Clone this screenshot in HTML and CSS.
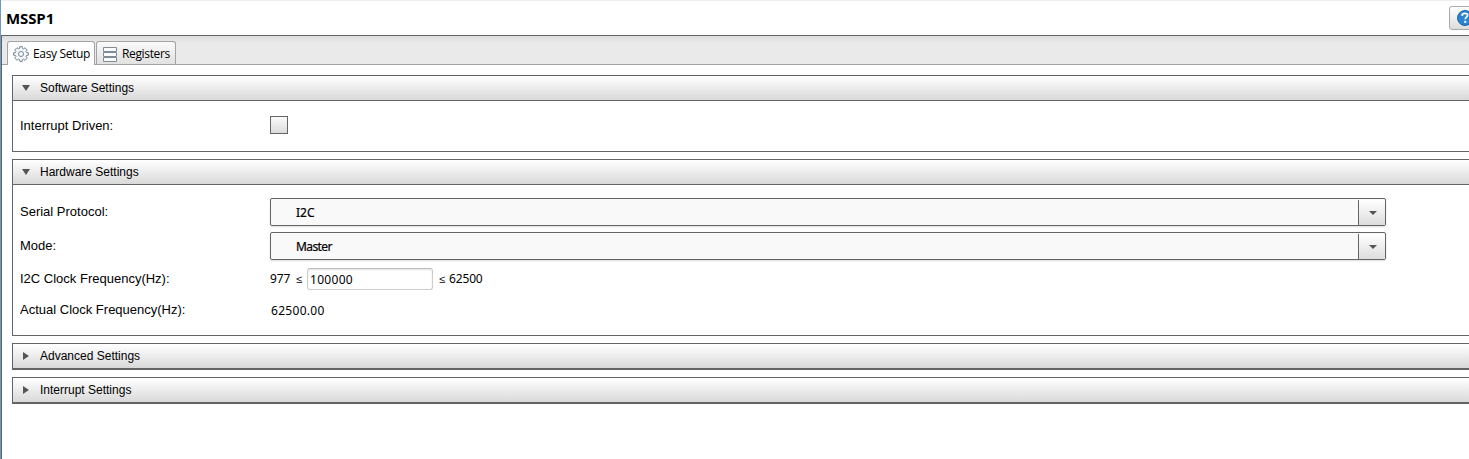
FILE: index.html
```html
<!DOCTYPE html>
<html lang="en">
<head>
<meta charset="utf-8">
<title>MSSP1</title>
<link rel="stylesheet" href="styles.css">
</head>
<body>
<div class="app">
  <header class="titlebar">
    <h1 class="title">MSSP1</h1>
    <button class="help" aria-label="Help">
      <svg width="16" height="16" viewBox="0 0 16 16"><circle cx="8" cy="8" r="7.5" fill="#2b83d0" stroke="#1a65ad"/><path d="M5.3 6V4.1Q6.5 3.3 8 3.3Q10.6 3.3 10.6 5.3Q10.6 6.5 9.2 7.4Q8.3 8 8.3 9.3" fill="none" stroke="#fff" stroke-width="1.7"/><path d="M7.2 10.8h2.1v2H7.2z" fill="#fff"/></svg>
    </button>
  </header>
  <main class="workspace">
    <nav class="tabs">
      <div class="tab tab-active">
        <svg class="gear" width="16" height="16" viewBox="0 0 16 16" fill="none" stroke="#6f8493"><path d="M6.6 2.4 6.8.6h2.4l.2 1.8 1.2.5L12 1.7 14.3 4l-1.2 1.4.5 1.2 1.8.2v2.4l-1.8.2-.5 1.2 1.2 1.4L12 14.3l-1.4-1.2-1.2.5-.2 1.8H6.8l-.2-1.8-1.2-.5L4 14.3 1.7 12l1.2-1.4-.5-1.2-1.8-.2V6.8l1.8-.2.5-1.2L1.7 4 4 1.7l1.4 1.2z" fill="#f4f8fa" /><circle cx="8" cy="8" r="2.5" fill="#fff"/></svg>
        <span class="tab-text easy">Easy Setup</span>
      </div>
      <div class="tab">
        <svg class="rows" width="14" height="15" viewBox="0 0 14 15" fill="#f8fafb" stroke="#7f8c95"><path d="M.5.5h13v4H.5zM.5 5.5h13v4H.5zM.5 10.5h13v4H.5z"/></svg>
        <span class="tab-text registers">Registers</span>
      </div>
    </nav>
    <div class="panels">
      <section class="panel software">
        <h2 class="panel-head"><svg class="arrow" width="8" height="6" viewBox="0 0 8 6"><path d="M0 0h8L4 6z"/></svg>Software Settings</h2>
        <div class="row row-check"><label class="label">Interrupt Driven:</label><span class="checkbox"></span></div>
      </section>
      <section class="panel hardware">
        <h2 class="panel-head"><svg class="arrow" width="8" height="6" viewBox="0 0 8 6"><path d="M0 0h8L4 6z"/></svg>Hardware Settings</h2>
        <div class="row row-select">
          <label class="label">Serial Protocol:</label>
          <div class="select"><span class="value i2c">I2C</span><span class="drop"><svg width="8" height="4" viewBox="0 0 8 4"><path d="M0 0h8L4 4z"/></svg></span></div>
        </div>
        <div class="row row-select">
          <label class="label">Mode:</label>
          <div class="select"><span class="value master">Master</span><span class="drop"><svg width="8" height="4" viewBox="0 0 8 4"><path d="M0 0h8L4 4z"/></svg></span></div>
        </div>
        <div class="row row-clock">
          <label class="label">I2C Clock Frequency(Hz):</label>
          <span class="minimum">977</span><span class="le">≤</span>
          <input class="input" type="text" value="100000">
          <span class="le le-max">≤</span><span class="maximum">62500</span>
        </div>
        <div class="row row-actual"><label class="label">Actual Clock Frequency(Hz):</label><span class="actual">62500.00</span></div>
      </section>
      <section class="panel collapsed">
        <h2 class="panel-head"><svg class="arrow" width="8" height="8" viewBox="0 0 8 8"><path d="M1 0v8l6-4z"/></svg>Advanced Settings</h2>
      </section>
      <section class="panel collapsed">
        <h2 class="panel-head"><svg class="arrow" width="8" height="8" viewBox="0 0 8 8"><path d="M1 0v8l6-4z"/></svg>Interrupt Settings</h2>
      </section>
    </div>
  </main>
</div>
</body>
</html>
```
FILE: styles.css
```css
* { box-sizing: border-box; }
body { margin: 0; overflow: hidden; background: #fff; color: #000; }
.app { height: 459px; border-left: 1px solid #7199bd; display: flex; flex-direction: column; overflow: hidden; }
.titlebar { height: 35px; flex: none; border-top: 1px solid #eee; display: flex; justify-content: space-between; overflow: hidden; }
.title { margin: 7px 0 0 5px; font: bold 15px/20px "Open Sans", sans-serif; letter-spacing: -.1px; }
.help { flex: none; width: 32px; height: 24px; margin: 5px -12px 0 0; padding: 0 0 0 7px; border: 1px solid #aaa; border-radius: 3px; background: linear-gradient(#fff, #ddd); display: flex; align-items: center; }
.workspace { flex: 1; border: solid #646464; border-width: 1px 0 0 1px; }
.tabs { height: 29px; padding: 5px 0 0 5px; display: flex; gap: 1px; background: linear-gradient(#ddd, #eaeaea 7px); border-bottom: 1px solid #a3a3a3; }
.tab { width: 80px; height: 23px; border: 1px solid #a3a3a3; border-bottom: 0; border-radius: 3px 3px 0 0; background: linear-gradient(#fafafa, #e1e1e1); display: flex; align-items: center; padding-left: 6px; }
.tab-active { width: 88px; height: 24px; background: #fff; padding: 0 0 2px 5px; }
.tab svg { flex: none; margin-top: 3px; }
.tab-text { font: 12px/18px "Open Sans", sans-serif; white-space: nowrap; margin-top: 2px; }
.easy { margin-left: 4px; letter-spacing: -.35px; }
.registers { margin-left: 5px; letter-spacing: -.35px; }
.panels { padding: 10px 0 0 10px; display: flex; flex-direction: column; gap: 7px; }
.panel { border: 1px solid #646464; border-right: 0; }
.software { height: 77px; }
.hardware { height: 177px; }
.panel-head { display: flex; align-items: center; height: 25px; margin: 0; padding: 0 0 1px 9px; border-bottom: 1px solid #646464; background: linear-gradient(#fff, #d9d9d9); font: 12px/18px "Liberation Sans", Arial, sans-serif; }
.arrow { margin-right: 10px; fill: #555; }
.collapsed { height: 27px; }
.row { display: flex; padding-left: 7px; }
.label { width: 250px; flex: none; font: 13px/18px "Liberation Sans", Arial, sans-serif; }
.row-check { margin-top: 15px; }
.row-check .label { padding-top: 1px; }
.checkbox { width: 18px; height: 18px; border: 1px solid #646464; background: linear-gradient(#fafafa, #dcdcdc); }
.row-select { height: 34px; }
.row-select .label { padding-top: 5px; }
.panel-head + .row-select { margin-top: 13px; }
.select { width: 1116px; height: 28px; display: flex; justify-content: space-between; border: 1px solid #646464; border-radius: 2px; background: #f9f9f9; box-shadow: 0 1px 2px #ddd; font: 12px/26px "Noto Sans", sans-serif; }
.value { padding: 1px 0 0 25px; }
.master { letter-spacing: -.6px; -webkit-text-stroke: .2px; }
.i2c { letter-spacing: 0; -webkit-text-stroke: .2px; }
.drop { width: 27px; padding-left: 2px; margin-top: 1px; border-left: 1px solid #646464; background: linear-gradient(#fff, #ddd); display: flex; align-items: center; justify-content: center; fill: #555; }
.row-clock { height: 30px; padding-top: 2px; font: 12px/18px "Noto Sans", sans-serif; }
.row-clock .label { padding-top: 2px; }
.minimum, .maximum, .le { padding-top: 2px; }
.minimum { width: 26px; letter-spacing: -.15px; }
.maximum { letter-spacing: -.15px; }
.le { width: 11px; font-size: 11px; }
.le-max { width: 10px; margin-left: 6px; }
.input { width: 126px; height: 22px; padding: 1px 2px 0; border: 1px solid #ccc; border-top-color: #bbb; border-radius: 3px; box-shadow: inset 0 1px 2px #e4e4e4; font: 12px/18px "Noto Sans", sans-serif; letter-spacing: .3px; }
.row-actual { padding-top: 5px; }
.actual { padding: 1px 0 0 1px; font: 12px/18px "Noto Sans", sans-serif; letter-spacing: .3px; }
```
